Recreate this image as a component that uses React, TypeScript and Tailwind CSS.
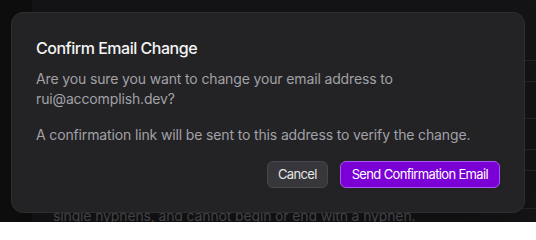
export default function App() {
  return (
    <div className="relative flex h-[222px] w-[536px] overflow-hidden bg-[#141416] font-['Inter','Noto_Sans',sans-serif]">
      {/* page behind the dialog */}
      <div className="w-8 shrink-0 bg-[#0e0e0f]" />
      <div className="flex flex-1">
        <div className="flex-1 px-[21px] pt-[206px]">
          <p className="whitespace-nowrap text-sm leading-5 tracking-[-0.01em] text-[#505055]">
            single hyphens, and cannot begin or end with a hyphen.
          </p>
        </div>
        <div className="flex w-[160px] flex-col pt-[60px]">
          <div className="h-[22px] border-y border-[#242427]" />
          <div className="h-[37px] border-b border-[#242427]" />
          <div className="mt-[30px] h-[22px] border-y border-[#242427]" />
          <div className="h-[38px] border-b border-[#242427]" />
        </div>
      </div>

      {/* dialog */}
      <div className="absolute left-[11px] top-3 w-[514px] rounded-xl border border-[#2e2e31] bg-[#232325] p-6 shadow-2xl">
        <h2 className="text-base font-medium leading-[22px] tracking-[-0.03em] text-[#f4f4f5]">
          Confirm Email Change
        </h2>
        <p className="mt-2.5 text-sm leading-5 tracking-[-0.01em] text-[#a1a1a7]">
          Are you sure you want to change your email address to rui@accomplish.dev?
        </p>
        <p className="mt-4 text-sm leading-5 tracking-[-0.01em] text-[#a1a1a7]">
          A confirmation link will be sent to this address to verify the change.
        </p>
        <div className="mt-4 flex justify-end gap-3">
          <button
            type="button"
            className="h-[27px] rounded-md border border-[#46464b] bg-[#37373b] px-2.5 text-[13px] tracking-[-0.05em] text-[#e4e4e7]"
          >
            Cancel
          </button>
          <button
            type="button"
            className="h-[27px] rounded-md border border-[#a855f7] bg-[#7a00d6] px-[11px] text-[13px] tracking-[-0.05em] text-white"
          >
            Send Confirmation Email
          </button>
        </div>
      </div>
    </div>
  );
}
